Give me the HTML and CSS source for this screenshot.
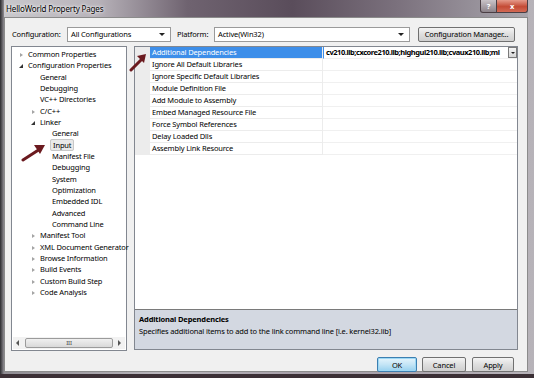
FILE: index.html
```html
<!DOCTYPE html>
<html lang="en">
<head>
  <meta charset="UTF-8" />
  <title>HelloWorld Property Pages</title>
  <link rel="stylesheet" href="styles.css">
</head>
<body>
  <div class="window">
    <div class="titlebar">
      <span class="title">HelloWorld Property Pages</span>
      <div class="caption-buttons">
        <span class="cap-help">?</span>
        <span class="cap-close">x</span>
      </div>
    </div>

    <div class="client">
      <div class="toolbar">
        <label class="lbl-config">Configuration:</label>
        <div class="combo combo-config">All Configurations<span class="combo-arrow"></span></div>
        <label class="lbl-platform">Platform:</label>
        <div class="combo combo-platform">Active(Win32)<span class="combo-arrow"></span></div>
        <button class="btn btn-manager">Configuration Manager...</button>
      </div>

      <div class="main">
        <div class="tree">
          <ul class="tree-list">
            <li class="lvl0 closed">Common Properties</li>
            <li class="lvl0 open">Configuration Properties</li>
            <li class="lvl1">General</li>
            <li class="lvl1">Debugging</li>
            <li class="lvl1">VC++ Directories</li>
            <li class="lvl1 closed">C/C++</li>
            <li class="lvl1 open">Linker</li>
            <li class="lvl2">General</li>
            <li class="lvl2"><span class="selected">Input</span></li>
            <li class="lvl2">Manifest File</li>
            <li class="lvl2">Debugging</li>
            <li class="lvl2">System</li>
            <li class="lvl2">Optimization</li>
            <li class="lvl2">Embedded IDL</li>
            <li class="lvl2">Advanced</li>
            <li class="lvl2">Command Line</li>
            <li class="lvl1 closed">Manifest Tool</li>
            <li class="lvl1 closed">XML Document Generator</li>
            <li class="lvl1 closed">Browse Information</li>
            <li class="lvl1 closed">Build Events</li>
            <li class="lvl1 closed">Custom Build Step</li>
            <li class="lvl1 closed">Code Analysis</li>
          </ul>
          <div class="hscroll">
            <span class="sb-arrow sb-left"></span>
            <span class="sb-thumb">III</span>
            <span class="sb-arrow sb-right"></span>
          </div>
        </div>

        <div class="props">
          <div class="grid">
            <div class="row active">
              <span class="gutter"></span>
              <span class="name">Additional Dependencies</span>
              <span class="value"><span class="value-text">cv210.lib;cxcore210.lib;highgui210.lib;cvaux210.lib;ml</span><span class="value-drop"></span></span>
            </div>
            <div class="row"><span class="gutter"></span><span class="name">Ignore All Default Libraries</span><span class="value"></span></div>
            <div class="row"><span class="gutter"></span><span class="name">Ignore Specific Default Libraries</span><span class="value"></span></div>
            <div class="row"><span class="gutter"></span><span class="name">Module Definition File</span><span class="value"></span></div>
            <div class="row"><span class="gutter"></span><span class="name">Add Module to Assembly</span><span class="value"></span></div>
            <div class="row"><span class="gutter"></span><span class="name">Embed Managed Resource File</span><span class="value"></span></div>
            <div class="row"><span class="gutter"></span><span class="name">Force Symbol References</span><span class="value"></span></div>
            <div class="row"><span class="gutter"></span><span class="name">Delay Loaded Dlls</span><span class="value"></span></div>
            <div class="row"><span class="gutter"></span><span class="name">Assembly Link Resource</span><span class="value"></span></div>
          </div>
          <div class="description">
            <div class="desc-title">Additional Dependencies</div>
            <div class="desc-text">Specifies additional items to add to the link command line [i.e. kernel32.lib]</div>
          </div>
        </div>
      </div>

      <div class="buttons">
        <button class="btn btn-ok">OK</button>
        <button class="btn btn-cancel">Cancel</button>
        <button class="btn btn-apply">Apply</button>
      </div>
    </div>

    <!-- red arrows drawn over the screenshot -->
    <svg class="arrow arrow-grid" width="20" height="20" viewBox="0 0 20 20">
      <path d="M2 18 L14 6" stroke="#6b1a1f" stroke-width="3" stroke-linecap="round"/>
      <path d="M8 4 L17 2 L15 11 Z" fill="#6b1a1f"/>
    </svg>
    <svg class="arrow arrow-tree" width="26" height="20" viewBox="0 0 26 20">
      <path d="M2 18 L19 7" stroke="#6b1a1f" stroke-width="3" stroke-linecap="round"/>
      <path d="M13 3 L24 3 L19 12 Z" fill="#6b1a1f"/>
    </svg>
  </div>
</body>
</html>
```

FILE: styles.css
```css
* {
  box-sizing: border-box;
  font-family: 'Noto Sans', 'Open Sans', sans-serif;
}

body {
  margin: 0;
  width: 534px;
  height: 378px;
  overflow: hidden;
  background: #3b2f35;
  font-size: 7.5px;
  letter-spacing: -0.15px;
  color: #000;
}

.window {
  position: relative;
  height: 374px;
  padding: 0 6px 2px 4px;
  background: linear-gradient(90deg, #2b2b2e 0, #8f8c92 4px, #b9b6bc 30%, #a49ca6 60%, #b7b3b9 100%);
}

.titlebar {
  height: 17px;
  display: flex;
  align-items: center;
  justify-content: space-between;
  background: linear-gradient(90deg, #c9c8cc 0%, #b7b2b9 18%, #6f6370 35%, #5a4d5b 55%, #7b717d 75%, #a9a6ad 100%);
}

.title {
  padding-left: 2px;
  font-size: 8px;
  color: #000;
  text-shadow: 0 0 4px #fff, 0 0 2px #fff;
}

.caption-buttons {
  display: flex;
  align-self: flex-start;
}

.cap-help,
.cap-close {
  height: 13px;
  display: flex;
  align-items: center;
  justify-content: center;
  color: #fff;
  font-weight: bold;
  border: 1px solid #4a3e44;
  border-top: none;
}

.cap-help {
  width: 17px;
  background: linear-gradient(#c9c3c8, #8c8289);
  border-radius: 0 0 0 3px;
}

.cap-close {
  width: 31px;
  background: linear-gradient(#e59a8a, #c44b35 55%, #d46a55);
  border-left: none;
  border-radius: 0 0 3px 0;
}

.client {
  height: 355px;
  background: #f0f0f0;
  border: 1px solid #8b8b8b;
  padding: 0 5px 0 6px;
}

.toolbar {
  display: flex;
  align-items: center;
  height: 16px;
  margin-top: 8px;
}

.lbl-config {
  width: 55px;
  margin-left: 1px;
}

.lbl-platform {
  width: 37px;
}

.combo {
  position: relative;
  height: 15px;
  line-height: 13px;
  padding-left: 3px;
  background: #fff;
  border: 1px solid #9a9a9a;
  margin-right: 6px;
}

.combo-config {
  width: 104px;
}

.combo-platform {
  width: 196px;
}

.combo-arrow {
  position: absolute;
  right: 5px;
  top: 5px;
  border-left: 3px solid transparent;
  border-right: 3px solid transparent;
  border-top: 3px solid #222;
}

.btn {
  height: 15px;
  padding: 0;
  font-size: 7.5px;
  letter-spacing: -0.15px;
  color: #000;
  background: linear-gradient(#f4f4f4, #dedede 50%, #cfcfcf);
  border: 1px solid #707070;
  border-radius: 2px;
}

.btn-manager {
  width: 97px;
  margin-left: 2px;
}

.main {
  display: flex;
  margin-top: 4px;
  gap: 7px;
}

.tree {
  width: 116px;
  height: 305px;
  background: #fff;
  border: 1px solid #828790;
  display: flex;
  flex-direction: column;
  justify-content: space-between;
}

.tree-list {
  list-style: none;
  margin: 0;
  padding: 2px 0 0;
}

.tree-list li {
  position: relative;
  height: 11.33px;
  line-height: 11.33px;
  white-space: nowrap;
}

.lvl0 {
  padding-left: 16px;
}

.lvl1 {
  padding-left: 28px;
}

.lvl2 {
  padding-left: 40px;
}

.closed::before,
.open::before {
  content: '';
  position: absolute;
  top: 3px;
}

.closed::before {
  border-top: 2.5px solid transparent;
  border-bottom: 2.5px solid transparent;
  border-left: 3px solid #a4a4a4;
  margin-top: 1px;
}

.lvl0.closed::before {
  left: 8px;
}

.lvl1.closed::before {
  left: 20px;
}

.open::before {
  border-left: 4px solid transparent;
  border-bottom: 4px solid #333;
  margin-top: 1px;
}

.lvl0.open::before {
  left: 7px;
}

.lvl1.open::before {
  left: 19px;
}

.selected {
  margin-left: -2px;
  padding: 0 2px;
  background: #e9e9e9;
  border: 1px solid #c8c8c8;
  border-radius: 2px;
}

.hscroll {
  display: flex;
  align-items: center;
  height: 12px;
  margin: 0 1px 1px;
  background: #f2f2f2;
}

.sb-arrow {
  width: 10px;
  height: 10px;
  position: relative;
}

.sb-left::after,
.sb-right::after {
  content: '';
  position: absolute;
  top: 2px;
  left: 3px;
  border-top: 3px solid transparent;
  border-bottom: 3px solid transparent;
}

.sb-left::after {
  border-right: 3px solid #555;
}

.sb-right::after {
  border-left: 3px solid #555;
}

.sb-thumb {
  flex: 1;
  height: 10px;
  line-height: 9px;
  text-align: center;
  font-size: 6px;
  color: #444;
  background: linear-gradient(#f0f0f0, #d9d9d9);
  border: 1px solid #9b9b9b;
  border-radius: 2px;
  margin: 0 2px;
}

.props {
  width: 384px;
  height: 304px;
  display: flex;
  flex-direction: column;
  border: 1px solid #828790;
}

.grid {
  flex: 1;
  background: #fff;
  border-bottom: 1px solid #7a7a7a;
}

.row {
  display: flex;
  height: 12px;
  line-height: 11px;
}

.gutter {
  width: 15px;
  background: #ececec;
}

.name {
  width: 173px;
  padding-left: 2px;
  border-bottom: 1px solid #ececec;
  border-right: 1px solid #ececec;
  white-space: nowrap;
}

.value {
  flex: 1;
  position: relative;
  padding-left: 2px;
  border-bottom: 1px solid #f0f0f0;
  white-space: nowrap;
  overflow: hidden;
}

.active .name {
  background: #3d8ee9;
  color: #fff;
}

.active .value {
  font-weight: bold;
  border-left: 1px solid #3d8ee9;
}

.value-text {
  letter-spacing: -0.45px;
}

.value-drop {
  position: absolute;
  right: 0;
  top: 0;
  width: 9px;
  height: 11px;
  background: linear-gradient(#f4f4f4, #d6d6d6);
  border: 1px solid #7a7a7a;
}

.value-drop::after {
  content: '';
  position: absolute;
  left: 1.5px;
  top: 4px;
  border-left: 2.5px solid transparent;
  border-right: 2.5px solid transparent;
  border-top: 2.5px solid #222;
}

.description {
  height: 39px;
  padding: 3px 4px;
  background: #d3d8e1;
  line-height: 12px;
}

.desc-title {
  font-weight: bold;
}

.buttons {
  display: flex;
  justify-content: flex-end;
  gap: 4px;
  margin-top: 6px;
  padding-right: 8px;
}

.btn-ok {
  width: 40px;
  margin-right: 1px;
  border-color: #3c7fb1;
  background: linear-gradient(#e5f4fc, #c4e5f6 50%, #98d1ef);
  box-shadow: 0 0 0 1px #9cd8f5 inset;
}

.btn-cancel {
  width: 44px;
}

.btn-apply {
  width: 42px;
  margin-left: 2px;
}

.arrow {
  position: absolute;
}

.arrow-grid {
  left: 129px;
  top: 52px;
}

.arrow-tree {
  left: 21px;
  top: 142px;
}
```
